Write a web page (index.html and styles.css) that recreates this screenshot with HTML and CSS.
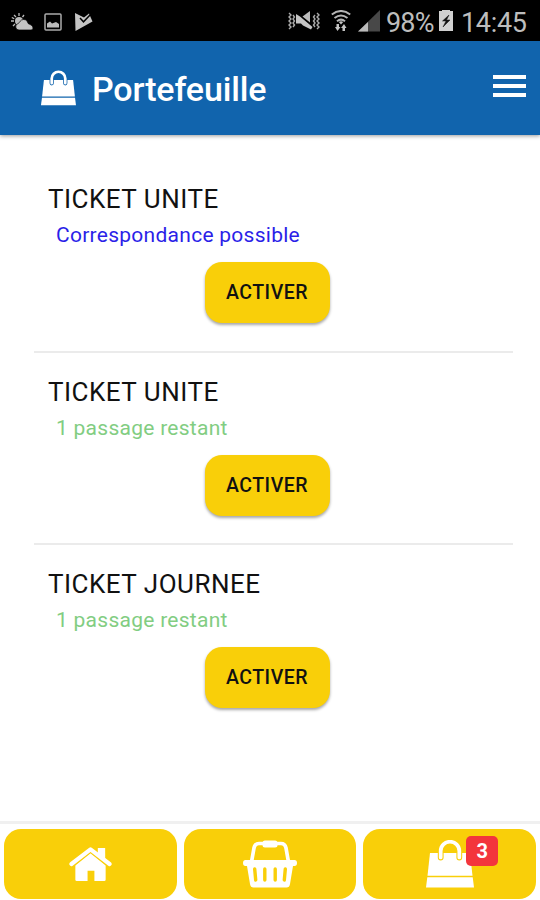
FILE: index.html
```html
<!DOCTYPE html>
<html lang="fr">
<head>
<meta charset="utf-8">
<title>Portefeuille</title>
<link rel="stylesheet" href="styles.css">
</head>
<body>
<svg class="defs" width="0" height="0">
  <symbol id="bag" viewBox="0 0 48 48">
    <path d="M4 13H44L46.5 35.8H1.5Z" fill="#fff"/>
    <path d="M1.3 37.2H46.7L48 47.5H0Z" fill="#fff"/>
    <path d="M14.7 17.5V11a9.3 9.3 0 0 1 18.6 0V17.5" fill="none" stroke="currentColor" stroke-width="5.8" stroke-linecap="round"/>
    <path d="M14.7 17.5V11a9.3 9.3 0 0 1 18.6 0V17.5" fill="none" stroke="#fff" stroke-width="3.7" stroke-linecap="round"/>
  </symbol>
</svg>
<div class="screen">
  <div class="status">
    <div class="notifications">
      <svg width="23" height="18" viewBox="0 0 23 18"><g stroke="#bbb" stroke-width="1.3"><path d="M8 0V3M3 2L5 4M0 8H3M2 13L4 11M13 2L11.5 4M0.8 4.5L3.2 5.8"/></g><circle cx="8" cy="8" r="4" fill="#bbb"/><path d="M8 17a3.3 3.3 0 0 1-.8-6.5C9 9.8 9 6.5 12.5 6.5c3 0 3.6 1.5 4.8 4.2 1 .5 4.7 1.5 4.7 4.3 0 1.2-1 2-2 2Z" fill="#c4c4c4" stroke="#000" stroke-width=".7"/></svg>
      <svg class="photo" width="18" height="18" viewBox="0 0 18 18"><rect x="1" y="1" width="16" height="16" rx="1" fill="none" stroke="#aaa" stroke-width="1.5"/><path d="M3 14.5V10.5L6 8.5L8 10.5L12 9L15 11V14.5Z" fill="#bbb"/></svg>
      <svg width="18" height="19" viewBox="0 0 18 19"><path d="M0 0L9 4.5L14 .5L17.5 8.5L0.5 18Z" fill="#c4c4c4"/><path d="M5 5L8.5 8.8L15.5 1.500" fill="none" stroke="#000" stroke-width="1.500"/></svg>
    </div>
    <div class="system">
      <svg width="33" height="22" viewBox="0 0 33 22"><g fill="none" stroke="#aaa" stroke-width="1.4"><path d="M1 3l2 2-2 2 2 2-2 2 2 2-2 2 2 2-2 2M5 5l1.500 2L5 9l1.500 2L5 13l1.500 2L5 17M27 5l-1.500 2L27 9l-1.500 2L27 13l-1.500 2L27 17M29 3l2 2-2 2 2 2-2 2 2 2-2 2 2 2-2 2"/></g><path d="M14.500 6.500L22 1V12.500Z" fill="#bbb"/><path d="M8 4L12 6.500L24.500 17L23 19.500L15 15.500L13 13.500H8Z" fill="#c4c4c4"/></svg>
      <svg class="wifi" width="20" height="22" viewBox="0 0 20 22"><g fill="none" stroke="#b5b5b5" stroke-width="2"><path d="M.8 4.500Q10-2.500 19.200 4.500M3.500 8Q10 3 16.500 8M6 11.200Q10 8 14 11.200"/></g><path d="M10 14.500L7.800 12Q10 10.500 12.200 12Z" fill="#c4c4c4"/><path d="M6.500 21L4 17H5.500V14H8V17H9.500ZM13 14L15.500 18H14V21H11.500V18H10Z" fill="#c4c4c4"/></svg>
      <svg class="signal" width="22" height="22" viewBox="0 0 22 22"><path d="M0 21.500L22 0V21.500Z" fill="#484848"/><path d="M0 21.500L10 12V21.500Z" fill="#bbb"/></svg>
      <span class="percent">98%</span>
      <svg class="battery" width="14" height="21" viewBox="0 0 14 21"><path d="M0 1H3V0H11V1H14V21H0Z" fill="#d0d0d0"/><path d="M10 5L3.500 11H7L4 17L11 10H7.500Z" fill="#111" stroke="#111" stroke-width=".5"/></svg>
      <span class="clock">14:45</span>
    </div>
  </div>
  <header class="header">
    <svg class="logo" width="35" height="36"><use href="#bag"/></svg>
    <h1>Portefeuille</h1>
    <div class="menu"><i></i><i></i><i></i></div>
  </header>
  <main class="list">
    <section class="ticket">
      <h2>TICKET UNITE</h2>
      <p class="transfer">Correspondance possible</p>
      <button>ACTIVER</button>
    </section>
    <section class="ticket">
      <h2>TICKET UNITE</h2>
      <p>1 passage restant</p>
      <button>ACTIVER</button>
    </section>
    <section class="ticket">
      <h2>TICKET JOURNEE</h2>
      <p>1 passage restant</p>
      <button>ACTIVER</button>
    </section>
  </main>
  <nav class="tabs">
    <div class="tab">
      <svg width="43" height="36" viewBox="0 0 44 36"><path d="M6.500 19L22 6.500L37.500 19V34Q37.500 35.500 36 35.500H26V25H19V35.500H8Q6.500 35.500 6.500 34Z" fill="#fff"/><path d="M2.500 18.500L22 3L41.500 18.500" fill="none" stroke="#f9cf09" stroke-width="6.500"/><path d="M2.500 18L22 3L41.500 18" fill="none" stroke="#fff" stroke-width="4.200" stroke-linecap="round" stroke-linejoin="round"/><path d="M29.500 1.500H37V13L29.500 7Z" fill="#fff"/></svg>
    </div>
    <div class="tab">
      <svg width="56" height="48" viewBox="0 0 56 48"><path d="M9.500 22L12 8Q13 3.500 17 3.500H39Q43 3.500 44 8L46.500 22" fill="none" stroke="#fff" stroke-width="3.700"/><rect x="20.500" y="0.500" width="15" height="7" rx="2.500" fill="#fff"/><path d="M3.500 20H52.500Q55 20 55 23T52.500 26H51L48 44Q47.500 47.500 44.500 47.500H11.500Q8.500 47.500 8 44L5 26H3.500Q1 26 1 23T3.500 20Z" fill="#fff"/><path d="M12.700 29L13.700 40M22.800 29V40M33.200 29V40M43.300 29L42.300 40" stroke="#f9cf09" stroke-width="3.400" stroke-linecap="round"/></svg>
    </div>
    <div class="tab">
      <svg width="48" height="48"><use href="#bag"/></svg>
      <span class="badge">3</span>
    </div>
  </nav>
</div>
</body>
</html>
```
FILE: styles.css
```css
* { box-sizing: border-box; }
body { margin: 0; background: #fff; font-family: Roboto, sans-serif; }
h1, h2, p { margin: 0; font-weight: 400; }
svg { display: block; flex: none; }
.defs { position: absolute; }
.screen { width: 540px; height: 900px; display: flex; flex-direction: column; overflow: hidden; }
.status { height: 41px; flex: none; background: #000; color: #bdbdbd; display: flex; justify-content: space-between; padding: 0 13px 0 11px; }
.notifications { display: flex; align-items: flex-start; padding-top: 13px; }
.photo { margin: 0 13px 0 10px; }
.system { display: flex; align-items: flex-start; padding-top: 10px; font-size: 27px; line-height: 26px; white-space: nowrap; }
.wifi { margin-left: 10px; }
.signal { margin-left: 7px; }
.percent { width: 49px; margin-left: 6px; letter-spacing: -.8px; }
.battery { margin-left: 4px; }
.clock { width: 66px; margin-left: 8px; letter-spacing: -.3px; }
.header { height: 94px; flex: none; background: #1164ad; color: #fff; display: flex; align-items: center; padding: 0 14px 0 41px; box-shadow: 0 1px 4px rgba(0, 0, 0, .4); }
.logo { color: #1164ad; }
.header h1 { margin-left: 16px; padding-top: 2px; font-size: 34px; line-height: 40px; font-weight: 500; letter-spacing: -.15px; }
.menu { margin-left: auto; width: 33px; display: grid; gap: 5px; padding-bottom: 4px; }
.menu i { height: 4px; background: #fff; }
.list { flex: 1; padding: 25px 27px 0 34px; }
.ticket { height: 192.5px; padding: 23px 0 0 14px; border-bottom: 2px solid #ebebeb; }
.ticket:last-child { border-bottom: 0; }
.ticket h2 { font-size: 26px; line-height: 33px; letter-spacing: .5px; color: #111; }
.ticket p { margin: 6px 0 0 8px; font-size: 21px; line-height: 26px; letter-spacing: .27px; color: #82cd82; }
.ticket .transfer { color: #2b1fe8; }
.ticket button { display: block; width: 125px; height: 61px; margin: 14px 0 0 156.5px; padding: 0; border: 0; border-radius: 17px; background: #f9cf09; font: 500 19.5px/62px Roboto, sans-serif; letter-spacing: .5px; color: #111; box-shadow: 0 2px 3px rgba(0, 0, 0, .35); }
.tabs { height: 79px; flex: none; border-top: 3px solid #f0f0f0; padding: 5px 4px 1px; display: grid; grid-template-columns: repeat(3, 1fr); gap: 7px; }
.tab { position: relative; display: flex; align-items: center; justify-content: center; border-radius: 17px; background: #f9cf09; color: #f9cf09; }
.badge { position: absolute; left: 103px; top: 7px; width: 32px; height: 30px; border-radius: 5px; background: #f3353c; color: #fff; font-size: 20px; font-weight: 700; line-height: 30px; text-align: center; }
```
